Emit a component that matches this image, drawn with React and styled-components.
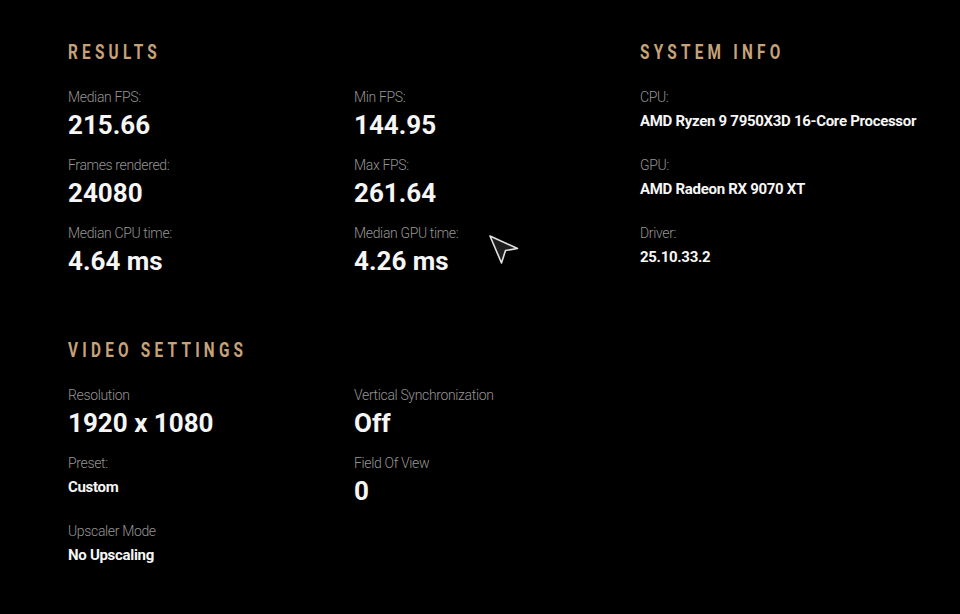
import React from 'react';
import styled, { createGlobalStyle } from 'styled-components';

const GlobalStyle = createGlobalStyle`
  html, body {
    margin: 0;
    padding: 0;
    background: #000;
  }
  body {
    font-family: Roboto, "Noto Sans", "DejaVu Sans", sans-serif;
    color: #f4f4f4;
  }
`;

const results = [
  { label: 'Median FPS:', value: '215.66' },
  { label: 'Min FPS:', value: '144.95' },
  { label: 'Frames rendered:', value: '24080' },
  { label: 'Max FPS:', value: '261.64' },
  { label: 'Median CPU time:', value: '4.64 ms' },
  { label: 'Median GPU time:', value: '4.26 ms' },
];

const video = [
  { label: 'Resolution', value: '1920 x 1080' },
  { label: 'Vertical Synchronization', value: 'Off' },
  { label: 'Preset:', value: 'Custom', small: true },
  { label: 'Field Of View', value: '0' },
  { label: 'Upscaler Mode', value: 'No Upscaling', small: true },
];

const system = [
  { label: 'CPU:', value: 'AMD Ryzen 9 7950X3D 16-Core Processor' },
  { label: 'GPU:', value: 'AMD Radeon RX 9070 XT' },
  { label: 'Driver:', value: '25.10.33.2' },
];

function Stat({ label, value, small }) {
  return (
    <Item>
      <Label>{label}</Label>
      <Value $small={small}>{value}</Value>
    </Item>
  );
}

export default function App() {
  return (
    <Page>
      <GlobalStyle />
      <Main>
        <Section>
          <Heading><span>Results</span></Heading>
          <StatGrid $cols={2}>
            {results.map((s) => <Stat key={s.label} {...s} />)}
          </StatGrid>
        </Section>
        <Section $spaced>
          <Heading><span>Video Settings</span></Heading>
          <StatGrid $cols={2}>
            {video.map((s) => <Stat key={s.label} {...s} />)}
          </StatGrid>
        </Section>
      </Main>
      <Side>
        <Section>
          <Heading><span>System Info</span></Heading>
          <StatGrid $cols={1}>
            {system.map((s) => <Stat key={s.label} {...s} small />)}
          </StatGrid>
        </Section>
      </Side>
      <Cursor width="32" height="32" viewBox="0 0 32 32">
        <path
          d="M2 2 L29.5 14.5 L17.5 16.5 L13.5 29 Z"
          fill="#1e1e1e"
          stroke="#e2e2e2"
          strokeWidth="1.6"
          strokeLinejoin="round"
        />
      </Cursor>
    </Page>
  );
}

const Page = styled.div`
  position: relative;
  display: grid;
  grid-template-columns: 572px 286px;
  padding: 40px 0 0 68px;
  width: 960px;
  height: 614px;
  box-sizing: border-box;
  overflow: hidden;
`;

const Main = styled.div`
  display: flex;
  flex-direction: column;
`;

const Side = styled.div`
  display: flex;
  flex-direction: column;
`;

const Section = styled.section`
  display: flex;
  flex-direction: column;
  margin-top: ${(p) => (p.$spaced ? '62px' : '0')};
`;

const Heading = styled.h2`
  margin: 0 0 25px;
  height: 24px;
  font-size: 21px;
  line-height: 24px;
  font-weight: 700;
  color: #c6a27b;
  text-transform: uppercase;
  white-space: nowrap;

  span {
    display: inline-block;
    letter-spacing: 5.8px;
    transform: scaleX(0.73);
    transform-origin: left center;
  }
`;

const StatGrid = styled.div`
  display: grid;
  grid-template-columns: repeat(${(p) => p.$cols}, 286px);
  grid-auto-rows: 51px;
  row-gap: 17px;
`;

const Item = styled.div`
  display: flex;
  flex-direction: column;
`;

const Label = styled.div`
  font-size: 14px;
  line-height: 17px;
  font-weight: 300;
  color: #959595;
  letter-spacing: -0.35px;
  white-space: nowrap;
`;

const Value = styled.div`
  margin-top: 4px;
  font-size: ${(p) => (p.$small ? '15px' : '26px')};
  line-height: ${(p) => (p.$small ? '22px' : '30px')};
  font-weight: 700;
  color: #f6f6f6;
  letter-spacing: ${(p) => (p.$small ? '-0.3px' : '0')};
  white-space: nowrap;
`;

const Cursor = styled.svg`
  position: absolute;
  left: 488px;
  top: 234px;
`;
